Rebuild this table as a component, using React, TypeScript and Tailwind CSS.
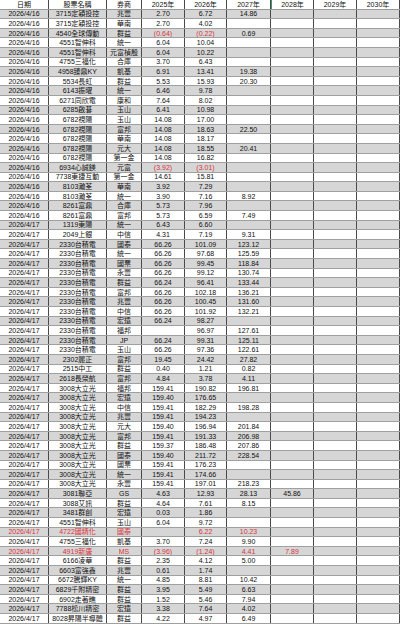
import React from "react";

type Row = {
  date: string;
  name: string;
  broker: string;
  v: string[]; // 2025..2030
  red?: boolean; // whole row red
};

const D16 = "2026/4/16";
const D17 = "2026/4/17";

const ROWS: Row[] = [
  { date: D16, name: "3715定穎投控", broker: "兆豐", v: ["2.70", "6.72", "14.86"] },
  { date: D16, name: "3715定穎投控", broker: "華南", v: ["2.70", "4.02"] },
  { date: D16, name: "4540全球傳動", broker: "群益", v: ["(0.64)", "(0.22)", "0.69"] },
  { date: D16, name: "4551智伸科", broker: "統一", v: ["6.04", "10.04"] },
  { date: D16, name: "4551智伸科", broker: "元富楨殷", v: ["6.04", "10.22"] },
  { date: D16, name: "4755三福化", broker: "合庫", v: ["3.70", "6.43"] },
  { date: D16, name: "4958臻鼎KY", broker: "凱基", v: ["6.91", "13.41", "19.38"] },
  { date: D16, name: "5534長虹", broker: "群益", v: ["5.53", "15.93", "20.30"] },
  { date: D16, name: "6143振曜", broker: "統一", v: ["6.46", "9.78"] },
  { date: D16, name: "6271同欣電", broker: "康和", v: ["7.64", "8.02"] },
  { date: D16, name: "6285啟碁", broker: "玉山", v: ["6.41", "10.98"] },
  { date: D16, name: "6782視陽", broker: "玉山", v: ["14.08", "17.00"] },
  { date: D16, name: "6782視陽", broker: "富邦", v: ["14.08", "18.63", "22.50"] },
  { date: D16, name: "6782視陽", broker: "華南", v: ["14.08", "18.17"] },
  { date: D16, name: "6782視陽", broker: "元大", v: ["14.08", "18.55", "20.41"] },
  { date: D16, name: "6782視陽", broker: "第一金", v: ["14.08", "16.82"] },
  { date: D16, name: "6934心誠鎂", broker: "元富", v: ["(3.92)", "(3.01)"] },
  { date: D16, name: "7738東捷互動", broker: "第一金", v: ["14.61", "15.81"] },
  { date: D16, name: "8103瀚荃", broker: "華南", v: ["3.92", "7.29"] },
  { date: D16, name: "8103瀚荃", broker: "統一", v: ["3.90", "7.16", "8.92"] },
  { date: D16, name: "8261富鼎", broker: "合庫", v: ["5.73", "7.96"] },
  { date: D16, name: "8261富鼎", broker: "富邦", v: ["5.73", "6.59", "7.49"] },
  { date: D17, name: "1319東陽", broker: "統一", v: ["6.43", "6.60"] },
  { date: D17, name: "2049上銀", broker: "中信", v: ["4.31", "7.19", "9.31"] },
  { date: D17, name: "2330台積電", broker: "國泰", v: ["66.26", "101.09", "123.12"] },
  { date: D17, name: "2330台積電", broker: "統一", v: ["66.26", "97.68", "125.59"] },
  { date: D17, name: "2330台積電", broker: "國票", v: ["66.26", "99.45", "118.84"] },
  { date: D17, name: "2330台積電", broker: "永豐", v: ["66.26", "99.12", "130.74"] },
  { date: D17, name: "2330台積電", broker: "群益", v: ["66.24", "96.41", "133.44"] },
  { date: D17, name: "2330台積電", broker: "富邦", v: ["66.26", "102.18", "136.21"] },
  { date: D17, name: "2330台積電", broker: "兆豐", v: ["66.26", "100.45", "131.60"] },
  { date: D17, name: "2330台積電", broker: "中信", v: ["66.26", "101.92", "132.21"] },
  { date: D17, name: "2330台積電", broker: "宏遠", v: ["66.24", "98.27"] },
  { date: D17, name: "2330台積電", broker: "福邦", v: ["", "96.97", "127.61"] },
  { date: D17, name: "2330台積電", broker: "JP", v: ["66.24", "99.31", "125.11"] },
  { date: D17, name: "2330台積電", broker: "玉山", v: ["66.26", "97.36", "122.61"] },
  { date: D17, name: "2302麗正", broker: "富邦", v: ["19.45", "24.42", "27.82"] },
  { date: D17, name: "2515中工", broker: "群益", v: ["0.40", "1.21", "0.82"] },
  { date: D17, name: "2618長榮航", broker: "富邦", v: ["4.84", "3.78", "4.11"] },
  { date: D17, name: "3008大立光", broker: "福邦", v: ["159.41", "190.82", "196.81"] },
  { date: D17, name: "3008大立光", broker: "宏遠", v: ["159.40", "176.65"] },
  { date: D17, name: "3008大立光", broker: "中信", v: ["159.41", "182.29", "198.28"] },
  { date: D17, name: "3008大立光", broker: "兆豐", v: ["159.41", "194.23"] },
  { date: D17, name: "3008大立光", broker: "元大", v: ["159.40", "196.94", "201.84"] },
  { date: D17, name: "3008大立光", broker: "富邦", v: ["159.41", "191.33", "206.98"] },
  { date: D17, name: "3008大立光", broker: "群益", v: ["159.37", "186.48", "207.86"] },
  { date: D17, name: "3008大立光", broker: "國泰", v: ["159.40", "211.72", "228.54"] },
  { date: D17, name: "3008大立光", broker: "國票", v: ["159.41", "176.23"] },
  { date: D17, name: "3008大立光", broker: "統一", v: ["159.41", "174.66"] },
  { date: D17, name: "3008大立光", broker: "永豐", v: ["159.41", "197.01", "218.23"] },
  { date: D17, name: "3081聯亞", broker: "GS", v: ["4.63", "12.93", "28.13", "45.86"] },
  { date: D17, name: "3088艾訊", broker: "群益", v: ["4.64", "7.61", "8.15"] },
  { date: D17, name: "3481群創", broker: "宏遠", v: ["0.03", "1.86"] },
  { date: D17, name: "4551智伸科", broker: "玉山", v: ["6.04", "9.72"] },
  { date: D17, name: "4722國精化", broker: "國泰", v: ["", "6.22", "10.23"], red: true },
  { date: D17, name: "4755三福化", broker: "凱基", v: ["3.70", "7.24", "9.90"] },
  { date: D17, name: "4919新唐", broker: "MS", v: ["(3.96)", "(1.24)", "4.41", "7.89"], red: true },
  { date: D17, name: "6166凌華", broker: "群益", v: ["2.35", "4.12", "5.00"] },
  { date: D17, name: "6603富強鑫", broker: "兆豐", v: ["0.61", "1.74"] },
  { date: D17, name: "6672騰輝KY", broker: "統一", v: ["4.85", "8.81", "10.42"] },
  { date: D17, name: "6829千附精密", broker: "群益", v: ["3.95", "5.49", "6.63"] },
  { date: D17, name: "6902走著瞧", broker: "群益", v: ["1.52", "5.46", "7.94"] },
  { date: D17, name: "7788松川精密", broker: "宏遠", v: ["3.38", "7.64", "4.02"] },
  { date: D17, name: "8028昇陽半導體", broker: "群益", v: ["4.22", "4.97", "6.49"] },
];

const HEADERS = ["日期", "股票名稱", "券商", "2025年", "2026年", "2027年", "2028年", "2029年", "2030年"];

const GRID = "grid grid-cols-[49px_58px_35px_43px_42px_44px_43px_43px_43px]";
const CELL = "flex h-full items-center justify-center overflow-hidden whitespace-nowrap border-r border-r-[#4a4a4a]";

export default function App() {
  return (
    <div
      className="h-[624px] w-[400px] overflow-hidden bg-white text-[7px] leading-none text-[#111]"
      style={{ fontFamily: '"Liberation Sans", "Noto Sans CJK TC", sans-serif' }}
    >
      <div className={`${GRID} h-[9.6px] border-b border-b-[#9a9a9a] bg-white`}>
        {HEADERS.map((h, i) => (
          <div
            key={h}
            className={`${CELL} ${i === 6 ? "border-l border-l-[#3f9b63]" : ""} ${i === 5 ? "border-r-[#3f9b63]" : ""}`}
          >
            {h}
          </div>
        ))}
      </div>
      {ROWS.map((r, idx) => {
        const gray = idx % 2 === 0;
        const base = r.red ? "text-[#d8343c]" : "";
        return (
          <div
            key={idx}
            className={`${GRID} h-[9.6px] border-b border-b-[#a0a0a0] ${gray ? "bg-[#d6d6d6]" : "bg-white"} ${base}`}
          >
            <div className={CELL}>{r.date}</div>
            <div className={CELL}>{r.name}</div>
            <div className={CELL}>{r.broker}</div>
            {[0, 1, 2, 3, 4, 5].map((k) => {
              const val = r.v[k] ?? "";
              const neg = val.startsWith("(");
              return (
                <div key={k} className={`${CELL} ${neg ? "text-[#d8343c]" : ""}`}>
                  {val}
                </div>
              );
            })}
          </div>
        );
      })}
    </div>
  );
}
